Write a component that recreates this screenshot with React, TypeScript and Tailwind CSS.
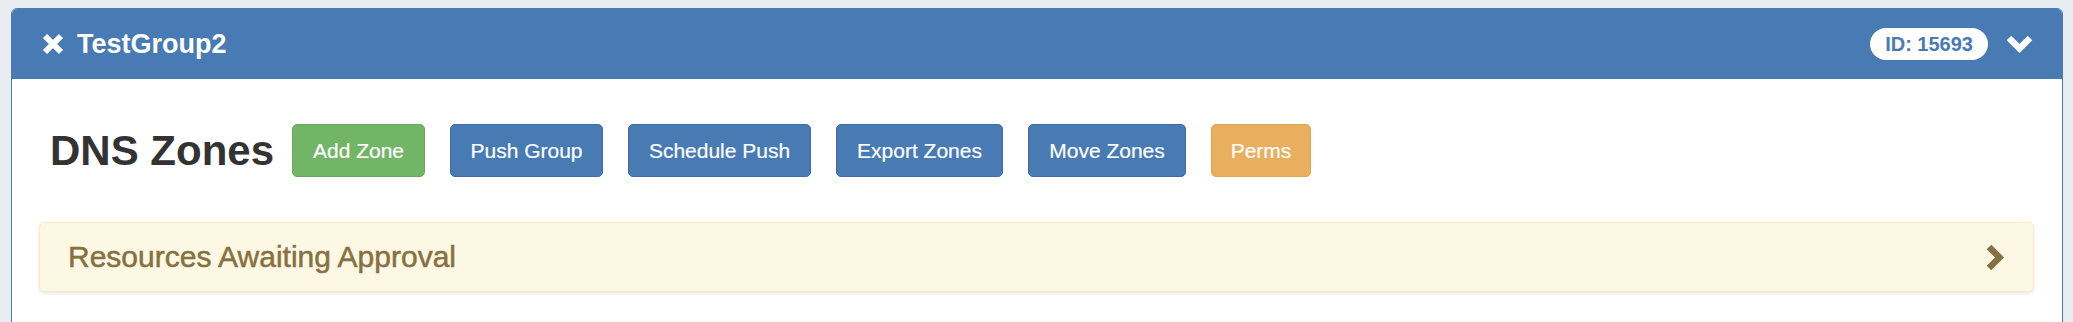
import React from "react";

const sans = "font-['Liberation_Sans',Arial,sans-serif]";

function TimesIcon() {
  return (
    <svg width="22" height="22" viewBox="0 0 22 22" className="shrink-0">
      <path d="M3 3 L19 19 M19 3 L3 19" stroke="white" strokeWidth="6" fill="none" />
    </svg>
  );
}

function ChevronDown({ color }: { color: string }) {
  return (
    <svg width="27" height="18" viewBox="0 0 27 18" className="shrink-0">
      <polyline points="3,3 13.5,13.5 24,3" stroke={color} strokeWidth="6.5" fill="none" strokeLinejoin="miter" />
    </svg>
  );
}

function ChevronRight({ color }: { color: string }) {
  return (
    <svg width="18" height="27" viewBox="0 0 18 27" className="shrink-0">
      <polyline points="3,3 13.5,13.5 3,24" stroke={color} strokeWidth="6.5" fill="none" strokeLinejoin="miter" />
    </svg>
  );
}

const buttons = [
  { label: "Add Zone", w: "w-[133px]", tone: "bg-[#72b567] border-[#67a95c]" },
  { label: "Push Group", w: "w-[153px]", tone: "bg-[#487ab4] border-[#3e6ca3]" },
  { label: "Schedule Push", w: "w-[183px]", tone: "bg-[#487ab4] border-[#3e6ca3]" },
  { label: "Export Zones", w: "w-[167px]", tone: "bg-[#487ab4] border-[#3e6ca3]" },
  { label: "Move Zones", w: "w-[158px]", tone: "bg-[#487ab4] border-[#3e6ca3]" },
  { label: "Perms", w: "w-[100px]", tone: "bg-[#e8af5e] border-[#e0a553]" },
];

export default function App() {
  return (
    <div className={`min-h-[322px] bg-[#e9edf1] pt-[8px] pl-[11px] pr-[10px] ${sans}`}>
      <div className="border border-[#487ab4] rounded-t-[6px] bg-white min-h-[320px]">
        {/* Header */}
        <div className="h-[70px] bg-[#487ab4] rounded-t-[5px] flex items-center pl-[30px] pr-[29px]">
          <TimesIcon />
          <span className="ml-[13px] text-white text-[27px] font-bold leading-none">TestGroup2</span>
          <div className="flex-1" />
          <span className="h-[32px] px-[15px] rounded-full bg-white text-[#487ab4] text-[20px] font-bold flex items-center leading-none">
            ID: 15693
          </span>
          <div className="ml-[18px]">
            <ChevronDown color="white" />
          </div>
        </div>

        {/* Body */}
        <div className="pt-[45px] pl-[27px] pr-[28px]">
          <div className="flex items-center pl-[11px]">
            <h1 className="text-[42px] font-bold text-[#333333] leading-none mr-[18px]">DNS Zones</h1>
            <div className="flex items-center gap-[25px]">
              {buttons.map((b) => (
                <button
                  key={b.label}
                  className={`${b.w} ${b.tone} h-[53px] border rounded-[5px] text-white text-[21px] leading-none flex items-center justify-center [-webkit-text-stroke:0.2px_white]`}
                >
                  {b.label}
                </button>
              ))}
            </div>
          </div>

          <div className="mt-[45px] h-[70px] bg-[#fcf8e3] border border-[#f8ebcb] rounded-[5px] shadow-[0_2px_3px_rgba(0,0,0,0.08)] flex items-center pl-[28px] pr-[29px]">
            <span className="text-[30px] text-[#87703f] leading-none [-webkit-text-stroke:0.5px_#87703f]">
              Resources Awaiting Approval
            </span>
            <div className="flex-1" />
            <ChevronRight color="#87703f" />
          </div>
        </div>
      </div>
    </div>
  );
}
